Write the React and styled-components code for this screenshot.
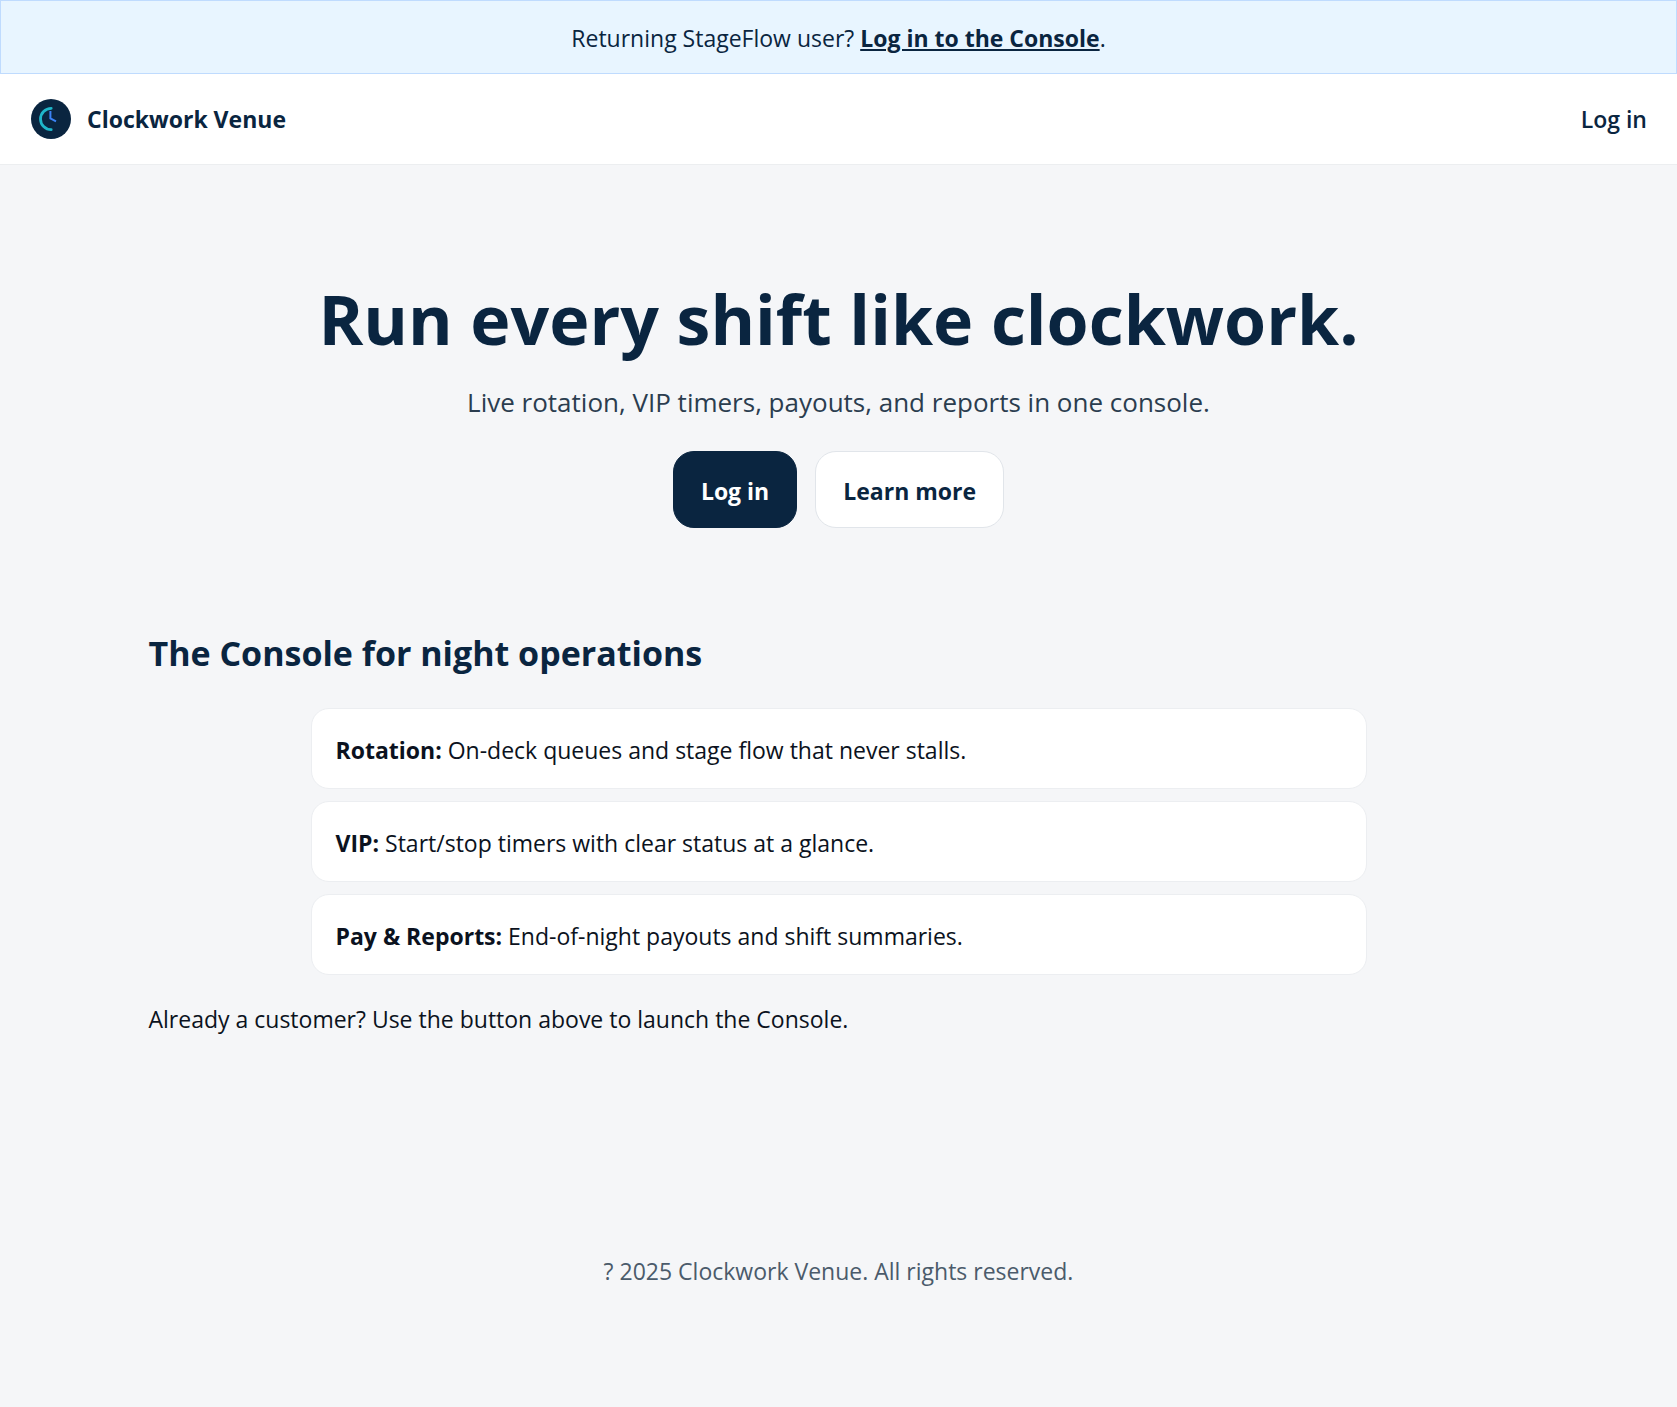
import React from "react";
import styled, { createGlobalStyle } from "styled-components";

const color = {
  navy: "#0a2540",
  ink: "#0b1220",
  slate: "#2b3d4f",
  muted: "#4b5b6b",
  page: "#f5f6f8",
};

const GlobalStyle = createGlobalStyle`
  *, *::before, *::after { box-sizing: border-box; }
  body {
    margin: 0;
    background: ${color.page};
    color: ${color.ink};
    font-family: "Segoe UI", "Open Sans", "Noto Sans", sans-serif;
    font-size: 23px;
    line-height: 36px;
  }
  h1, h2, p, ul { margin: 0; padding: 0; }
  a { color: inherit; }
`;

const Page = styled.div`
  display: flex;
  flex-direction: column;
  min-height: 100vh;
`;

const Banner = styled.aside`
  padding: 19px 18px 17px;
  text-align: center;
  color: ${color.navy};
  background: #e8f5ff;
  border: 1px solid #bfdbfe;
`;

const BannerLink = styled.a`
  font-weight: 700;
  text-decoration: underline;
  text-underline-offset: 2px;
  text-decoration-thickness: 2px;
`;

const Header = styled.header`
  display: flex;
  align-items: center;
  justify-content: space-between;
  padding: 25px 30px 25px 31px;
  background: #ffffff;
  border-bottom: 1px solid #eceef0;
`;

const Brand = styled.div`
  display: flex;
  align-items: center;
  gap: 16px;
  color: ${color.navy};
  font-weight: 700;
`;

const Logo = styled.svg`
  width: 40px;
  height: 40px;
`;

const NavLink = styled.a`
  color: ${color.navy};
  font-weight: 600;
  text-decoration: none;
`;

const Hero = styled.section`
  display: flex;
  flex-direction: column;
  align-items: center;
  padding: 114px 24px 101px;
  text-align: center;
`;

const Title = styled.h1`
  color: ${color.navy};
  font-size: 68px;
  line-height: 80px;
  font-weight: 700;
`;

const Subtitle = styled.p`
  margin-top: 23px;
  color: ${color.slate};
  font-size: 26px;
  line-height: 40px;
`;

const Actions = styled.div`
  display: flex;
  gap: 18px;
  margin-top: 29px;
`;

const Button = styled.button`
  padding: 21px 27px 18px;
  border: 1px solid ${(p) => (p.$primary ? color.navy : "#e1e5ea")};
  border-radius: 21px;
  background: ${(p) => (p.$primary ? color.navy : "#ffffff")};
  color: ${(p) => (p.$primary ? "#ffffff" : color.navy)};
  font: inherit;
  font-weight: 700;
  cursor: pointer;
`;

const Section = styled.section`
  width: 100%;
  max-width: 1428px;
  margin: 0 auto;
  padding: 0 24px;
`;

const SectionTitle = styled.h2`
  color: ${color.navy};
  font-size: 34px;
  line-height: 48px;
  font-weight: 700;
`;

const FeatureList = styled.ul`
  display: grid;
  gap: 12px;
  max-width: 1056px;
  margin: 31px auto 26px;
  list-style: none;
`;

const Feature = styled.li`
  padding: 23px 24px 20px;
  background: #ffffff;
  border: 1px solid #eceef1;
  border-radius: 18px;
`;

const Footer = styled.footer`
  padding: 216px 24px 96px;
  text-align: center;
  color: ${color.muted};
`;

const features = [
  { name: "Rotation:", text: "On-deck queues and stage flow that never stalls." },
  { name: "VIP:", text: "Start/stop timers with clear status at a glance." },
  { name: "Pay & Reports:", text: "End-of-night payouts and shift summaries." },
];

export default function App() {
  return (
    <Page>
      <GlobalStyle />
      <Banner>
        Returning StageFlow user? <BannerLink href="#console">Log in to the Console</BannerLink>.
      </Banner>
      <Header>
        <Brand>
          <Logo viewBox="0 0 40 40" fill="none" aria-hidden="true">
            <circle cx="20" cy="20" r="20" fill={color.navy} />
            <path d="M20.2 9.3a10.7 10.7 0 0 0 0 21.4" stroke="#1fb6c9" strokeWidth="2.8" strokeLinecap="round" />
            <path d="M19.4 12v7.4l5.6 2.9" stroke="#3b82f6" strokeWidth="2" />
          </Logo>
          <span>Clockwork Venue</span>
        </Brand>
        <nav>
          <NavLink href="#login">Log in</NavLink>
        </nav>
      </Header>
      <main>
        <Hero>
          <Title>Run every shift like clockwork.</Title>
          <Subtitle>Live rotation, VIP timers, payouts, and reports in one console.</Subtitle>
          <Actions>
            <Button type="button" $primary>Log in</Button>
            <Button type="button">Learn more</Button>
          </Actions>
        </Hero>
        <Section>
          <SectionTitle>The Console for night operations</SectionTitle>
          <FeatureList>
            {features.map((f) => (
              <Feature key={f.name}>
                <strong>{f.name}</strong> {f.text}
              </Feature>
            ))}
          </FeatureList>
          <p>Already a customer? Use the button above to launch the Console.</p>
        </Section>
      </main>
      <Footer>? 2025 Clockwork Venue. All rights reserved.</Footer>
    </Page>
  );
}
